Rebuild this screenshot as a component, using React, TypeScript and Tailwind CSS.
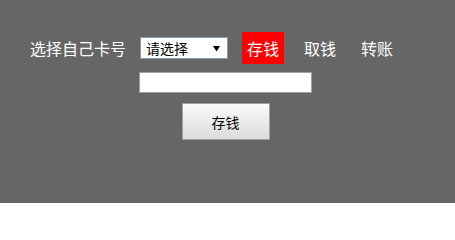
import React from 'react';

export default function App() {
  return (
    <div className="w-[455px] h-[203px] bg-[#666666] font-['Noto_Sans_CJK_SC',sans-serif] text-white">
      <div className="flex items-center pt-[32px] pl-[30px] h-[64px]">
        <span className="text-[16px] leading-none">选择自己卡号</span>
        <div className="ml-[14px] flex h-[22px] w-[88px] items-center justify-between border border-[#7f9db9] bg-white pl-[5px] pr-[7px] text-black">
          <span className="text-[14px] leading-none">请选择</span>
          <svg width="7" height="7" viewBox="0 0 7 7">
            <path d="M0 1 H7 L3.5 6.5 Z" fill="#000" />
          </svg>
        </div>
        <div className="ml-[14px] flex items-center gap-[15px]">
          <span className="flex h-[32px] w-[42px] items-center justify-center bg-[#ff0000] text-[16px] leading-none">存钱</span>
          <span className="flex h-[32px] w-[42px] items-center justify-center text-[16px] leading-none">取钱</span>
          <span className="flex h-[32px] w-[42px] items-center justify-center text-[16px] leading-none">转账</span>
        </div>
      </div>
      <div className="flex flex-col items-center pr-[4px]">
        <input className="mt-[8px] h-[21px] w-[173px] border border-[#a0a0a0] bg-white outline-none" />
        <button className="mt-[10px] flex h-[37px] w-[88px] items-center justify-center border border-[#a0a0a0] bg-gradient-to-b from-[#fafafa] to-[#dcdcdc] text-[14px] leading-none text-black">
          存钱
        </button>
      </div>
    </div>
  );
}
